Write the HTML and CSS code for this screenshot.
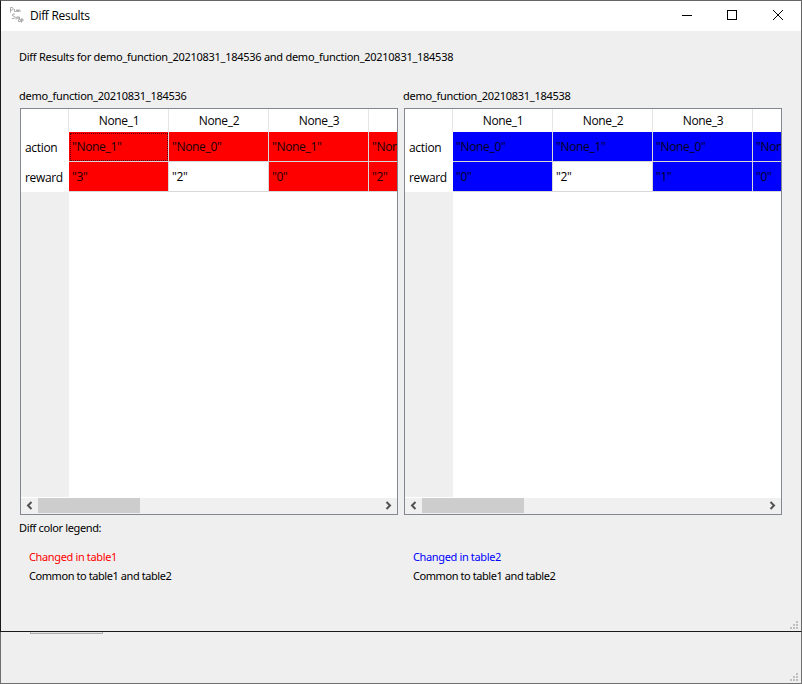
FILE: index.html
```
<!DOCTYPE html>
<html lang="en">
<head>
<meta charset="utf-8">
<title>Diff Results</title>
<link rel="stylesheet" href="styles.css">
</head>
<body>
<main class="window">
  <header class="titlebar">
    <svg class="logo" width="16" height="18" viewBox="0 0 16 18" fill="none" stroke="#999" stroke-width="0.8"><path d="M1.5 6.500V1.500h2q1.500 1.200 0 2.500h-2M5.500 3v2.500h2V3.500M8.500 6V4h1v2M9.500 4h1.500v2M6 8H4q-1.500 1.200 0 2h1q1.500 1.500 0 2.500H3M7 10.500v3M8 13v-2h1.200v2M9.200 11h1.300v2M9.500 13.500h2v2h-2zM12.500 12.500v4M12.500 13h1.500v2h-1.500"/></svg>
    <h1 class="title">Diff Results</h1>
    <svg class="controls" width="120" height="29" viewBox="0 0 120 29" fill="none" stroke="#000" shape-rendering="crispEdges"><path d="M0 14.500h10M45.500 9.500h9v9h-9z"/><path shape-rendering="auto" d="M91 9l10 10M101 9l-10 10"/></svg>
  </header>
  <p class="summary">Diff Results for demo_function_20210831_184536 and demo_function_20210831_184538</p>
  <div class="panes">
    <section class="pane">
      <h2 class="name">demo_function_20210831_184536</h2>
      <div class="frame">
        <div class="grid red">
          <div class="corner"></div><div class="col">None_1</div><div class="col">None_2</div><div class="col">None_3</div><div class="col last"></div>
          <div class="row">action</div><div class="cell changed focus">"None_1"</div><div class="cell changed">"None_0"</div><div class="cell changed">"None_1"</div><div class="cell changed last">"None_0"</div>
          <div class="row">reward</div><div class="cell changed">"3"</div><div class="cell">"2"</div><div class="cell changed">"0"</div><div class="cell changed last">"2"</div>
        </div>
        <div class="empty"></div>
        <div class="scroll"><svg width="17" height="15" viewBox="0 0 17 15"><path d="M10.500 4L7 7.500L10.500 11" fill="none" stroke="#505050" stroke-width="2"/></svg><div class="thumb"></div><svg width="17" height="15" viewBox="0 0 17 15"><path d="M6.500 4l3.500 3.500L6.500 11" fill="none" stroke="#505050" stroke-width="2"/></svg></div>
      </div>
    </section>
    <section class="pane">
      <h2 class="name">demo_function_20210831_184538</h2>
      <div class="frame">
        <div class="grid blue">
          <div class="corner"></div><div class="col">None_1</div><div class="col">None_2</div><div class="col">None_3</div><div class="col last"></div>
          <div class="row">action</div><div class="cell changed">"None_0"</div><div class="cell changed">"None_1"</div><div class="cell changed">"None_0"</div><div class="cell changed last">"None_1"</div>
          <div class="row">reward</div><div class="cell changed">"0"</div><div class="cell">"2"</div><div class="cell changed">"1"</div><div class="cell changed last">"0"</div>
        </div>
        <div class="empty"></div>
        <div class="scroll"><svg width="17" height="15" viewBox="0 0 17 15"><path d="M10.500 4L7 7.500L10.500 11" fill="none" stroke="#505050" stroke-width="2"/></svg><div class="thumb"></div><svg width="17" height="15" viewBox="0 0 17 15"><path d="M6.500 4l3.500 3.500L6.500 11" fill="none" stroke="#505050" stroke-width="2"/></svg></div>
      </div>
    </section>
  </div>
  <p class="legend-title">Diff color legend:</p>
  <div class="legend">
    <div class="key"><p class="key-red">Changed in table1</p><p class="common">Common to table1 and table2</p></div>
    <div class="key"><p class="key-blue">Changed in table2</p><p class="common">Common to table1 and table2</p></div>
  </div>
  <svg class="grip" width="8" height="8" viewBox="0 0 8 8" fill="#bfbfbf"><path d="M6 0h2v2H6zM3 3h2v2H3zM6 3h2v2H6zM0 6h2v2H0zM3 6h2v2H3zM6 6h2v2H6z"/></svg>
</main>
<div class="behind">
  <div class="button-edge"></div>
  <svg class="grip" width="8" height="8" viewBox="0 0 8 8" fill="#bfbfbf"><path d="M6 0h2v2H6zM3 3h2v2H3zM6 3h2v2H6zM0 6h2v2H0zM3 6h2v2H3zM6 6h2v2H6z"/></svg>
</div>
</body>
</html>
```
FILE: styles.css
```
* { box-sizing: border-box; }
body { margin: 0; width: 802px; height: 684px; overflow: hidden; background: #efefef; color: #000; font: 11px/14px "Noto Sans", sans-serif; }
p, h1, h2 { margin: 0; font-weight: normal; font-size: inherit; white-space: nowrap; }
.window { position: relative; height: 632px; border: 1px solid #1b191c; border-top-color: #666; border-right-color: #666; background: #efefef; }
.titlebar { display: flex; height: 30px; background: #fff; }
.logo { margin: 5px 0 0 8px; }
.title { margin: 0 auto 0 5px; font: 12px/30px "Open Sans", sans-serif; letter-spacing: -0.3px; }
.controls { margin-right: -1px; }
.summary { margin: 19px 0 0 18px; letter-spacing: -0.27px; }
.panes { display: flex; gap: 6px; margin: 25px 0 0 19px; }
.pane { width: 378px; }
.name { margin-left: -1px; height: 19px; letter-spacing: -0.28px; }
.frame { display: flex; flex-direction: column; height: 407px; border: 1px solid #828790; background: #fff; overflow: hidden; }
.grid { display: grid; grid-template-columns: 48px repeat(3, 100px) 28px; grid-template-rows: 23px 30px 30px; font: 12px/17px "Open Sans", sans-serif; letter-spacing: -0.33px; }
.corner { border-right: 1px solid #e5e5e5; width: 48px; }
.col { padding-left: 1px; text-align: center; border-right: 1px solid #e5e5e5; line-height: 23px; }
.row { padding-left: 4px; line-height: 31px; }
.cell { padding-left: 3px; line-height: 29px; border-right: 1px solid #d8d8d8; border-bottom: 1px solid #d8d8d8; overflow: hidden; white-space: nowrap; }
.last { border-right: 0; }
.red .changed { background: #f00; background-clip: padding-box; color: #180000; }
.blue .changed { background: #00f; background-clip: padding-box; color: #000018; }
.focus { outline: 1px dotted #600000; outline-offset: -2px; }
.empty { flex: 1; width: 48px; background: #efefef; margin-bottom: 1px; }
.scroll { display: flex; height: 16px; background: #f0f0f0; }
.thumb { width: 102px; height: 15px; margin-right: auto; background: #cdcdcd; }
.legend-title { margin: 6px 0 0 18px; letter-spacing: -0.36px; }
.legend { display: flex; margin: 12px 0 0 28px; }
.key { width: 384px; line-height: 19px; }
.key-red { color: #f00; letter-spacing: -0.36px; }
.key-blue { color: #00f; letter-spacing: -0.36px; }
.common { letter-spacing: -0.43px; }
.grip { position: absolute; right: 3px; bottom: 2px; }
.behind { position: relative; height: 52px; border: 1px solid #707070; border-top: 0; }
.button-edge { width: 73px; height: 2px; margin-left: 29px; border: 1px solid #adadad; border-top: 0; background: #e1e1e1; }
```
